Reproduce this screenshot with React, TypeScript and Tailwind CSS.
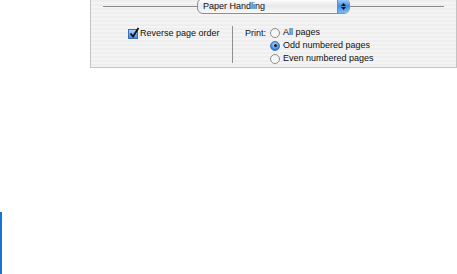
import React from 'react';

const font = { fontFamily: '"Lucida Grande", "Liberation Sans", Arial, sans-serif' };

function Radio({ checked }: { checked?: boolean }) {
  return (
    <span
      className={
        'relative inline-block w-[10px] h-[10px] rounded-full border shrink-0 ' +
        (checked
          ? 'border-[#3a6fb8] bg-[radial-gradient(circle_at_50%_35%,#bfe0ff,#3d8fe6_60%,#1f63c4)]'
          : 'border-[#8c8c8c] bg-[linear-gradient(#f0f0f0,#ffffff)]')
      }
    >
      {checked && (
        <span className="absolute left-[2.5px] top-[2.5px] w-[3px] h-[3px] rounded-full bg-[#1a1a1a]" />
      )}
    </span>
  );
}

function Checkbox() {
  return (
    <span className="relative inline-block w-[10px] h-[10px] border border-[#3a6fb8] bg-[linear-gradient(#a9d2ff,#3d8fe6)] shrink-0">
      <svg className="absolute -left-[1px] -top-[3px]" width="12" height="12" viewBox="0 0 12 12">
        <path d="M2.5 6.5 L5 9.5 L10.5 1" stroke="#111" strokeWidth="1.8" fill="none" />
      </svg>
    </span>
  );
}

export default function App() {
  return (
    <div className="w-[457px] h-[274px] bg-white flex flex-col text-[9px] text-[#111]" style={font}>
      <div className="flex">
        <div className="w-[90px]" />
        <div className="w-[367px] h-[68px] border-l border-r border-b border-[#c4c4c4] bg-[repeating-linear-gradient(#eeeeee_0px,#eeeeee_2px,#f4f4f4_2px,#f4f4f4_4px)] flex flex-col">
          {/* section header with popup */}
          <div className="flex items-center pl-[12px] pr-[12px] h-[13px]">
            <div className="flex-1 h-px bg-[#8a8a8a]" />
            <div className="w-[153px] h-[16px] flex rounded-[6px] border border-[#8e8e8e] overflow-hidden bg-[linear-gradient(#ffffff,#e9e9e9_50%,#f8f8f8)] mt-[-2px]">
              <span className="flex-1 pl-[5px] pt-[1px] leading-[13px]">Paper Handling</span>
              <span className="w-[12px] bg-[linear-gradient(#a8d3ff,#3f8fe8_50%,#7ab8f6)] border-l border-[#5a8fd0] flex flex-col items-center justify-center gap-[1px] pt-[1px]">
                <svg width="5" height="3" viewBox="0 0 5 3"><path d="M0 3 L2.5 0 L5 3 Z" fill="#111" /></svg>
                <svg width="5" height="3" viewBox="0 0 5 3"><path d="M0 0 L2.5 3 L5 0 Z" fill="#111" /></svg>
              </span>
            </div>
            <div className="flex-1 h-px bg-[#8a8a8a]" />
          </div>

          <div className="flex mt-[13px]">
            <div className="w-[141px] pl-[37px] pt-[2px]">
              <label className="flex items-center gap-[1px] h-[12px]">
                <Checkbox />
                <span className="ml-[1px]">Reverse page order</span>
              </label>
            </div>
            <div className="w-px h-[37px] bg-[#8f8f8f]" />
            <div className="pl-[12px] flex">
              <span className="pt-[1px] leading-[13px] mr-[4px]">Print:</span>
              <div className="flex flex-col">
                <label className="flex items-center gap-[3px] h-[13px]"><Radio />All pages</label>
                <label className="flex items-center gap-[3px] h-[13px]"><Radio checked />Odd numbered pages</label>
                <label className="flex items-center gap-[3px] h-[13px]"><Radio />Even numbered pages</label>
              </div>
            </div>
          </div>
        </div>
      </div>
      <div className="flex-1 flex flex-col">
        <div className="h-[144px]" />
        <div className="flex-1 w-[2px] bg-[#1a72d4]" />
      </div>
    </div>
  );
}
